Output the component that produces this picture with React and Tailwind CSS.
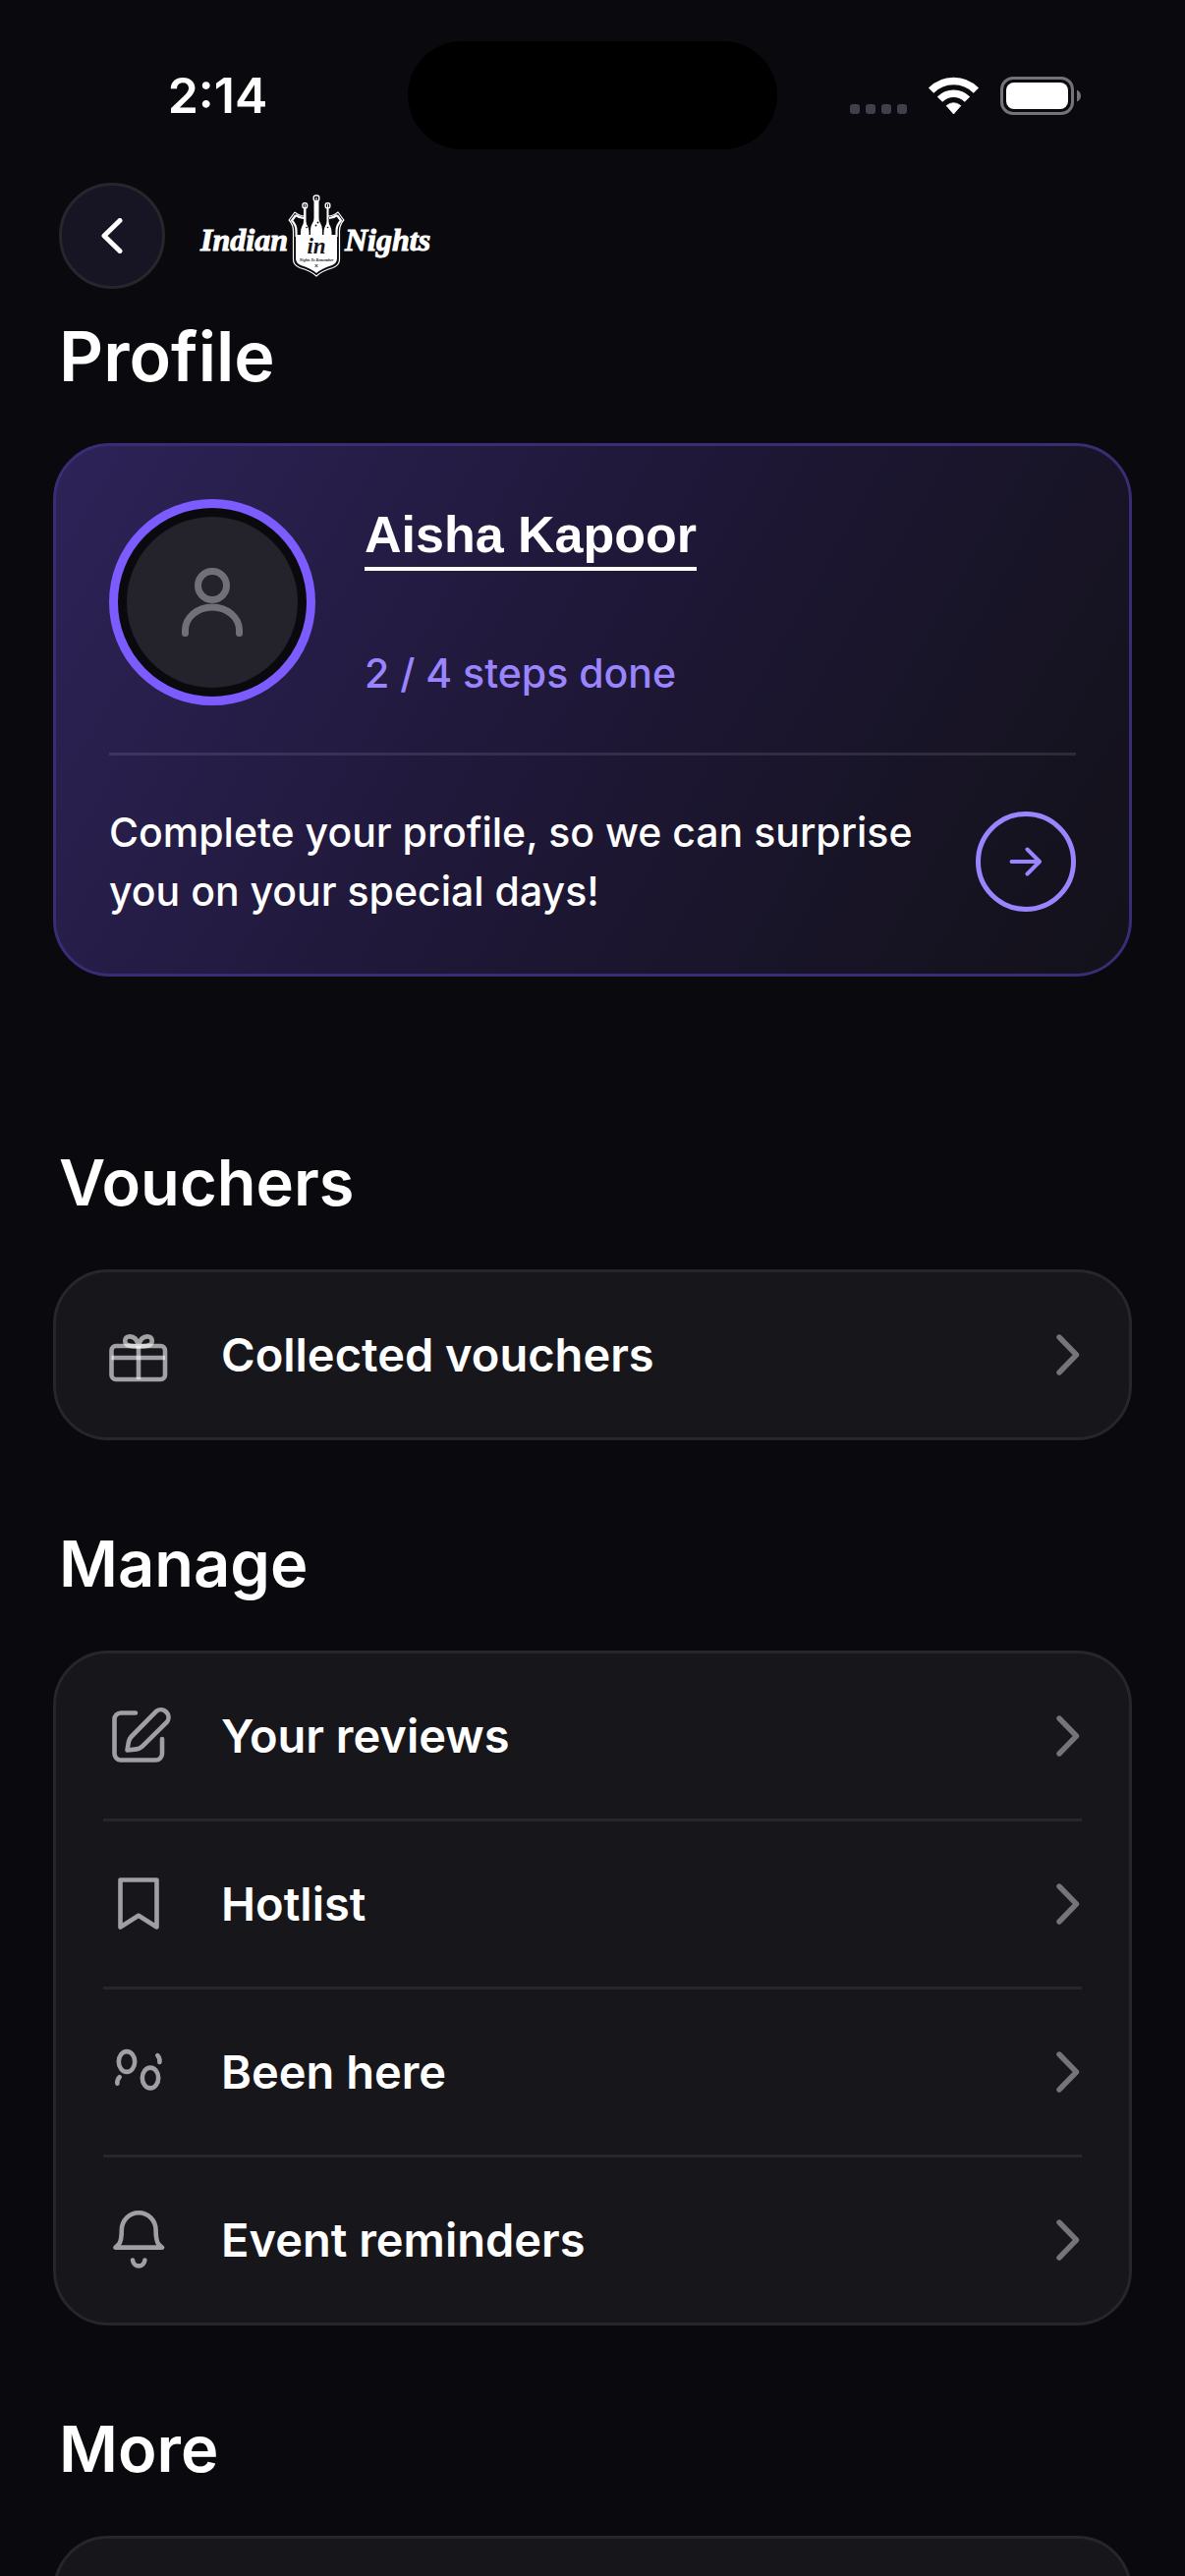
const manageItems = [
  { title: 'Your reviews', icon: EditIcon },
  { title: 'Hotlist', icon: BookmarkIcon },
  { title: 'Been here', icon: FootstepsIcon },
  { title: 'Event reminders', icon: BellIcon }
];

function RowIcon({ children }) {
  return (
    <svg
      viewBox="0 0 60 60"
      className="size-[60px] shrink-0 overflow-visible text-[#a09fa5]"
      fill="none"
      stroke="currentColor"
      strokeWidth="4.6"
      strokeLinecap="round"
      strokeLinejoin="round"
      aria-hidden="true"
    >
      {children}
    </svg>
  );
}

function GiftIcon() {
  return (
    <RowIcon>
      <g stroke="#ffffff" strokeOpacity="0.6" strokeLinecap="butt">
        <rect x="2.5" y="21" width="54.5" height="34" rx="4.5" />
        <path d="M2.5 33H57" />
        <path d="M30 21V55" />
        <path d="M30 20.5C28 13 24 11 20 11.5C16 12 15 17 18 19.5C20 21.5 25 21.5 30 21.5C35 21.5 40 21.5 42 19.5C45 17 44 12 40 11.5C36 11 32 13 30 20.5Z" />
      </g>
    </RowIcon>
  );
}

function EditIcon() {
  return (
    <RowIcon>
      <path d="M27 6.5H12A6.5 6.5 0 0 0 5.5 13V48A6.5 6.5 0 0 0 12 54.5H47.5A6.5 6.5 0 0 0 54 48V33" />
      <path d="M18.5 44.5L19.8 36.5Q20.3 33 22.8 30.5L48 4.8A7.8 7.8 0 0 1 59 15.6L33.5 40.8Q31 43 28 43.4Z" />
    </RowIcon>
  );
}

function BookmarkIcon() {
  return (
    <RowIcon>
      <path d="M11.5 5.5H48.5V53.5L30 41.8L11.5 53.5Z" />
    </RowIcon>
  );
}

function FootstepsIcon() {
  return (
    <RowIcon>
      <ellipse cx="18" cy="19.5" rx="8.2" ry="10.4" />
      <ellipse cx="42" cy="36" rx="8.2" ry="10.4" />
      <path d="M49.3 13.2Q52 16 51.4 20" />
      <path d="M10.7 35.2Q8 38 8.4 41.8" />
    </RowIcon>
  );
}

function BellIcon() {
  return (
    <RowIcon>
      <path d="M12.8 20A17.4 17.8 0 0 1 47.6 20C47.6 27 48 31 50.3 34.3L54 37.6H6.4L10 34.3C12.4 31 12.8 27 12.8 20Z" />
      <path d="M24 50.5A6.3 7.2 0 0 0 36.4 50.5" />
    </RowIcon>
  );
}

function ChevronRight() {
  return (
    <svg viewBox="0 0 24 42" className="h-[42px] w-6 shrink-0" fill="none" stroke="#75747b" strokeWidth="5.4" strokeLinecap="round" strokeLinejoin="round" aria-hidden="true">
      <path d="M3 3L20.5 21L3 39" />
    </svg>
  );
}

function StatusBar() {
  return (
    <div className="mt-[42px] grid h-[110px] shrink-0 grid-cols-[1fr_376px_1fr] items-center">
      <div className="pl-7 text-center text-[50px] leading-[60px] font-semibold">2:14</div>
      <div className="h-full rounded-full bg-black" />
      <div className="flex items-center justify-center pr-8">
        <svg viewBox="0 0 236 40" className="h-10 w-[236px]" aria-hidden="true">
          <g fill="#413f4b">
            <rect x="0" y="29" width="10" height="10" rx="3" />
            <rect x="16" y="29" width="10" height="10" rx="3" />
            <rect x="32" y="29" width="10" height="10" rx="3" />
            <rect x="48" y="29" width="10" height="10" rx="3" />
          </g>
          <g fill="none" stroke="#ffffff" strokeWidth="7.4">
            <path d="M82.6 15.2A32 32 0 0 1 128.4 15.2" />
            <path d="M91.5 24.2A19.5 19.5 0 0 1 119.5 24.2" />
          </g>
          <path d="M105.5 39L98.2 30.6Q105.5 24.8 112.8 30.6Z" fill="#ffffff" stroke="#ffffff" strokeWidth="0.8" strokeLinejoin="round" />
          <rect x="154.5" y="2.5" width="72" height="36" rx="11.5" fill="none" stroke="#74737a" strokeWidth="3" />
          <rect x="159" y="7" width="63" height="27" rx="8" fill="#ffffff" />
          <path d="M231 14.5Q235 16.5 235 20.5Q235 24.5 231 26.5Z" fill="#74737a" />
        </svg>
      </div>
    </div>
  );
}

function Logo() {
  return (
    <div className="flex items-center font-['Liberation_Serif',serif] text-[32px] leading-[40px] font-bold italic" aria-label="Indian Nights">
      <span className="pt-2 [-webkit-text-stroke:1px_white]">Indian</span>
      <svg viewBox="0 0 58 84" className="h-[84px] w-[58px]">
        {/* shield outline */}
        <path
          d="M7 18L1.2 26Q5.5 31 5.5 37V66Q5.5 72 12 74.5Q24 78 29 83Q34 78 46 74.5Q52.5 72 52.5 66V37Q52.5 31 56.8 26L51 18Q46 22 41 22M7 18Q12 22 17 22"
          fill="none"
          stroke="#ffffff"
          strokeWidth="1.2"
        />
        <path d="M8 21L4 26.5Q8.5 31 8.5 37V43M50 21L54 26.5Q49.5 31 49.5 37V43M8 21Q12 24 16 24M50 21Q46 24 42 24" fill="none" stroke="#ffffff" strokeWidth="2.2" />
        <path d="M8 41H50V65Q50 70 45 72Q34 75.5 29 80Q24 75.5 13 72Q8 70 8 65Z" fill="#ffffff" />
        {/* bottles */}
        <path d="M27.5 1.5H30.5Q31.5 1.5 31.5 4V24Q31.5 27 33 29Q35 32 35 36V42H23V36Q23 32 25 29Q26.5 27 26.5 24V4Q26.5 1.5 27.5 1.5Z" fill="#ffffff" />
        <path d="M16.5 9.5H18.5V27Q18.5 30 20 32Q21.5 35 21.5 38V42H13V38Q13 35 14.5 32Q16 30 16 27V9.5Z" fill="#ffffff" />
        <path d="M39.5 9.5H41.5V27Q41.5 30 43 32Q44.5 35 44.5 38V42H36.5V38Q36.5 35 38 32Q39.5 30 39.5 27Z" fill="#ffffff" />
        <g fill="#0a0a0e" stroke="#ffffff" strokeWidth="1.4">
          <rect x="26.2" y="1" width="5.6" height="5.6" rx="2" />
          <rect x="15" y="8.8" width="4.6" height="5" rx="1.8" />
          <rect x="38.2" y="8.8" width="4.6" height="5" rx="1.8" />
        </g>
        <g fill="#0a0a0e">
          <circle cx="30.5" cy="28.5" r="0.9" />
          <circle cx="28.5" cy="31.5" r="0.9" />
          <circle cx="19" cy="33.5" r="0.8" />
          <circle cx="40.5" cy="33.5" r="0.8" />
        </g>
        <path d="M29 3V6M17.3 10V13M40.5 10V13" stroke="#ffffff" strokeWidth="1" />
        <text x="29" y="60" textAnchor="middle" fontSize="23" fill="#17161c">in</text>
        <text x="29" y="68" textAnchor="middle" fontSize="4" fill="#17161c">Nights To Remember</text>
        <path d="M27.6 71L30.4 74M30.4 71L27.6 74" stroke="#17161c" strokeWidth="0.8" />
      </svg>
      <span className="pt-2 [-webkit-text-stroke:1px_white]">Nights</span>
    </div>
  );
}

function SectionTitle({ children }) {
  return <h2 className="mb-[52px] px-[60px] text-[65px] leading-[72px] font-semibold">{children}</h2>;
}

function MenuRow({ title, icon: Icon }) {
  return (
    <a href="#" className="flex h-[168px] items-center gap-[54px] pr-0.5 pl-1.5">
      <Icon />
      <span className="flex-1 text-[47px] leading-[60px] font-semibold">{title}</span>
      <ChevronRight />
    </a>
  );
}

export default function App() {
  return (
    <div className="flex h-screen flex-col overflow-hidden bg-[#0a0a0e] font-['Inter',sans-serif] text-white">
      <StatusBar />

      {/* Header */}
      <header className="mt-[34px] flex items-center gap-9 px-[60px]">
        <button type="button" aria-label="Back" className="flex size-[108px] items-center justify-center rounded-full border-3 border-[#27262d] bg-[#171523]">
          <svg viewBox="0 0 22 36" className="h-9 w-[22px]" fill="none" stroke="#ffffff" strokeWidth="5" strokeLinecap="round" strokeLinejoin="round">
            <path d="M19 2.5L3 18L19 33.5" />
          </svg>
        </button>
        <Logo />
      </header>
      <h1 className="mt-[33px] mb-[52px] px-[60px] text-[70px] leading-[72px] font-semibold">Profile</h1>

      {/* Profile Card */}
      <section className="mx-[54px] rounded-[58px] border-3 border-[#3a2c75] bg-linear-120 from-[#2d2358] via-[#1e1736] to-[#131119] p-[54px]">
        <div className="flex gap-[50px] border-b-3 border-white/10 pb-12">
          <div className="flex size-[210px] items-center justify-center rounded-full border-9 border-[#7c5cff] bg-[#0a0a0e]">
            <div className="flex size-[174px] items-center justify-center rounded-full bg-[#24232c]">
              <svg viewBox="0 0 64 70" className="h-[70px] w-16" fill="none" stroke="#717078" strokeWidth="7" strokeLinecap="round" aria-hidden="true">
                <circle cx="32" cy="18" r="14.5" />
                <path d="M4.5 66.5V63.5A27.5 23.5 0 0 1 59.5 63.5V66.5" />
              </svg>
            </div>
          </div>
          <div className="flex flex-col items-start justify-between py-[3px]">
            <a href="#" className="border-b-4 border-white font-['Liberation_Sans',sans-serif] text-[52px] leading-[66px] font-bold">
              Aisha Kapoor
            </a>
            <p className="text-[41px] leading-[60px] font-medium text-[#9b85ff]">2 / 4 steps done</p>
          </div>
        </div>
        <div className="mt-12 flex items-center justify-between">
          <p className="max-w-[850px] text-[41px] leading-[60px] font-medium">Complete your profile, so we can surprise you on your special days!</p>
          <button type="button" aria-label="Complete profile" className="flex size-[102px] shrink-0 items-center justify-center rounded-full border-5 border-[#9b85ff]">
            <svg viewBox="0 0 34 30" className="h-[30px] w-[34px]" fill="none" stroke="#9b85ff" strokeWidth="4" strokeLinecap="round" strokeLinejoin="round">
              <path d="M2.5 15H31M18.5 2.5L31 15L18.5 27.5" />
            </svg>
          </button>
        </div>
      </section>

      {/* Vouchers */}
      <div className="mt-[174px]">
        <SectionTitle>Vouchers</SectionTitle>
        <nav className="mx-[54px] rounded-[56px] border-3 border-[#26262b] bg-[#17161b] px-12">
          <MenuRow title="Collected vouchers" icon={GiftIcon} />
        </nav>
      </div>

      {/* Manage */}
      <div className="mt-[90px]">
        <SectionTitle>Manage</SectionTitle>
        <nav className="mx-[54px] divide-y-3 divide-[#26262b] rounded-[56px] border-3 border-[#26262b] bg-[#17161b] px-12">
          {manageItems.map((item) => (
            <div key={item.title}>
              <MenuRow title={item.title} icon={item.icon} />
            </div>
          ))}
        </nav>
      </div>

      {/* More */}
      <div className="mt-[90px] flex flex-1 flex-col">
        <SectionTitle>More</SectionTitle>
        <div className="mx-[54px] h-[174px] shrink-0 rounded-[56px] border-3 border-[#26262b] bg-[#17161b]" />
      </div>
    </div>
  );
}
